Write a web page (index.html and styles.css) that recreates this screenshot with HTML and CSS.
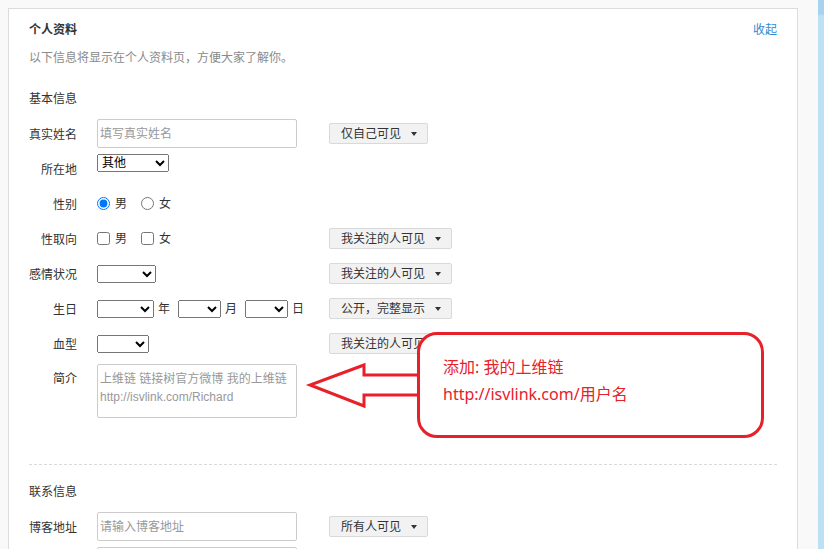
FILE: index.html
```html
<!DOCTYPE html>
<html lang="zh-CN">
<head>
<meta charset="utf-8">
<title>个人资料</title>
<link rel="stylesheet" href="styles.css">
</head>
<body>
<div class="page">
  <section class="card">
    <div class="card-head">
      <h2 class="title">个人资料</h2>
      <a class="toggle" href="#">收起</a>
    </div>
    <p class="desc">以下信息将显示在个人资料页，方便大家了解你。</p>

    <h3 class="group">基本信息</h3>

    <div class="row row-input">
      <label class="lbl">真实姓名</label>
      <div class="field"><input class="text" type="text" placeholder="填写真实姓名"></div>
      <button class="vis">仅自己可见<i class="caret"></i></button>
    </div>

    <div class="row row-top">
      <label class="lbl lbl-low">所在地</label>
      <div class="field"><select class="sel w71"><option>其他</option></select></div>
    </div>

    <div class="row">
      <label class="lbl">性别</label>
      <div class="field choices">
        <input class="radio" type="radio" name="sex" checked><span class="opt">男</span>
        <input class="radio" type="radio" name="sex"><span class="opt">女</span>
      </div>
    </div>

    <div class="row">
      <label class="lbl">性取向</label>
      <div class="field choices">
        <input class="check" type="checkbox"><span class="opt">男</span>
        <input class="check" type="checkbox"><span class="opt">女</span>
      </div>
      <button class="vis">我关注的人可见<i class="caret"></i></button>
    </div>

    <div class="row">
      <label class="lbl">感情状况</label>
      <div class="field"><select class="sel w59"><option></option></select></div>
      <button class="vis">我关注的人可见<i class="caret"></i></button>
    </div>

    <div class="row">
      <label class="lbl">生日</label>
      <div class="field dates">
        <select class="sel w57"><option></option></select><span class="unit">年</span>
        <select class="sel w43"><option></option></select><span class="unit">月</span>
        <select class="sel w43"><option></option></select><span class="unit">日</span>
      </div>
      <button class="vis">公开，完整显示<i class="caret"></i></button>
    </div>

    <div class="row">
      <label class="lbl">血型</label>
      <div class="field"><select class="sel w52"><option></option></select></div>
      <button class="vis">我关注的人可见<i class="caret"></i></button>
    </div>

    <div class="row row-bio">
      <label class="lbl lbl-bio">简介</label>
      <div class="field"><textarea class="bio">上维链 链接树官方微博 我的上维链
http://isvlink.com/Richard</textarea></div>
    </div>

    <hr class="divider">

    <h3 class="group group-contact">联系信息</h3>

    <div class="row row-input">
      <label class="lbl">博客地址</label>
      <div class="field"><input class="text" type="text" placeholder="请输入博客地址"></div>
      <button class="vis">所有人可见<i class="caret"></i></button>
    </div>

    <div class="row row-input row-next">
      <label class="lbl"></label>
      <div class="field"><input class="text" type="text"></div>
    </div>
  </section>
  <div class="scrollbar"></div>
</div>

<svg class="arrow" width="116" height="52" viewBox="0 0 116 52" aria-hidden="true">
  <polyline points="116,15 59,15 59,5 5,25 59,46 59,35 116,35" fill="#fff" stroke="#e8202a" stroke-width="3" stroke-linejoin="miter"/>
</svg>
<div class="callout">
  <p class="callout-line">添加: 我的上维链</p>
  <p class="callout-line">http://isvlink.com/用户名</p>
</div>
</body>
</html>
```

FILE: styles.css
```css
html, body {
  margin: 0;
  padding: 0;
  height: 100%;
  overflow: hidden;
}

body {
  background: #f9f9f9;
  font-family: "Liberation Sans", "Noto Sans CJK SC", sans-serif;
  font-size: 12px;
  color: #333;
  position: relative;
}

.page {
  display: flex;
  align-items: flex-start;
  height: 100%;
}

.card {
  margin: 8px 0 0 8px;
  width: 790px;
  box-sizing: border-box;
  background: #fff;
  border: 1px solid #dcdcdc;
  padding: 12px 20px 40px 20px;
  min-height: 600px;
}

.scrollbar {
  margin-left: auto;
  width: 6px;
  height: 100%;
  background: linear-gradient(to bottom, #a8d3ee 0, #a8d3ee 14px, #bfe1f4 16px, #bde0f3 100%);
}

.card-head {
  display: flex;
  justify-content: space-between;
  align-items: center;
  height: 16px;
}

.title {
  margin: 0;
  font-size: 12px;
  line-height: 16px;
  font-weight: bold;
  color: #333;
  position: relative;
  top: 1px;
}

.toggle {
  color: #2f8ad6;
  text-decoration: none;
  line-height: 16px;
  position: relative;
  top: 1px;
}

.desc {
  margin: 13px 0 0 0;
  line-height: 16px;
  color: #8a8a8a;
}

.group {
  margin: 25px 0 0 0;
  font-size: 12px;
  line-height: 16px;
  font-weight: normal;
  color: #333;
}

.group-contact {
  margin-top: 19px;
}

.row {
  display: grid;
  grid-template-columns: 48px 212px auto;
  column-gap: 20px;
  align-items: center;
  height: 35px;
}

.row-input {
  margin-top: 12px;
  height: 29px;
}

.row-next {
  margin-top: 6px;
}

.row-top {
  height: 38px;
  align-items: start;
  padding-top: 6px;
  box-sizing: border-box;
}

.row-bio {
  height: 57px;
  align-items: start;
  padding-top: 3px;
  box-sizing: border-box;
}

.lbl {
  text-align: right;
  line-height: 16px;
  padding-top: 2px;
  white-space: nowrap;
  color: #333;
}

.lbl-low {
  margin-top: 6px;
}

.lbl-bio {
  margin-top: 5px;
}

.field {
  display: flex;
  align-items: center;
}

.vis {
  justify-self: start;
  display: inline-flex;
  align-items: center;
  height: 21px;
  box-sizing: border-box;
  padding: 1px 10px 0 11px;
  background: #f2f2f2;
  border: 1px solid #d9d9d9;
  border-radius: 2px;
  font: inherit;
  font-size: 12px;
  color: #333;
  line-height: 18px;
}

.caret {
  display: inline-block;
  width: 0;
  height: 0;
  margin-left: 10px;
  border-left: 3.5px solid transparent;
  border-right: 3.5px solid transparent;
  border-top: 4px solid #333;
}

.text {
  width: 200px;
  height: 29px;
  box-sizing: border-box;
  border: 1px solid #cccccc;
  border-radius: 2px;
  padding: 1px 2px 0 2px;
  font: inherit;
  font-size: 12px;
  color: #333;
  outline: none;
  background: #fff;
}

.text::placeholder {
  color: #999;
}

.sel {
  height: 18px;
  box-sizing: border-box;
  font-family: "Liberation Sans", "Noto Sans CJK SC", sans-serif;
  font-size: 12px;
  color: #000;
  margin: 0;
  padding: 0;
}

.w71 { width: 72px; }
.w59 { width: 59px; }
.w57 { width: 57px; }
.w52 { width: 52px; }
.w43 { width: 43px; }

.dates .unit {
  margin: 0 8px 0 4px;
  line-height: 16px;
}

.dates .unit:last-child {
  margin-right: 0;
}

.choices .radio,
.choices .check {
  width: 13px;
  height: 13px;
  margin: 0;
}

.choices .opt {
  margin: 0 14px 0 5px;
  line-height: 16px;
  padding-top: 1px;
}

.bio {
  width: 200px;
  height: 54px;
  box-sizing: border-box;
  border: 1px solid #cccccc;
  border-radius: 2px;
  padding: 5px 2px 0 2px;
  font-family: "Liberation Sans", "Noto Sans CJK SC", sans-serif;
  font-size: 12px;
  line-height: 18px;
  color: #999;
  resize: none;
  overflow: hidden;
  outline: none;
}

.divider {
  margin: 46px 0 0 0;
  height: 0;
  border: 0;
  border-top: 1px dashed #d9d9d9;
}

.arrow {
  position: absolute;
  left: 305px;
  top: 360px;
}

.callout {
  position: absolute;
  left: 417px;
  top: 332px;
  width: 347px;
  height: 106px;
  box-sizing: border-box;
  border: 3px solid #e8202a;
  border-radius: 20px;
  background: #fff;
  padding: 19px 0 0 23px;
  font-family: "Noto Sans", "Noto Sans CJK SC", sans-serif;
  font-size: 16px;
  color: #e8202a;
}

.callout-line {
  margin: 0;
  line-height: 27px;
}
```
